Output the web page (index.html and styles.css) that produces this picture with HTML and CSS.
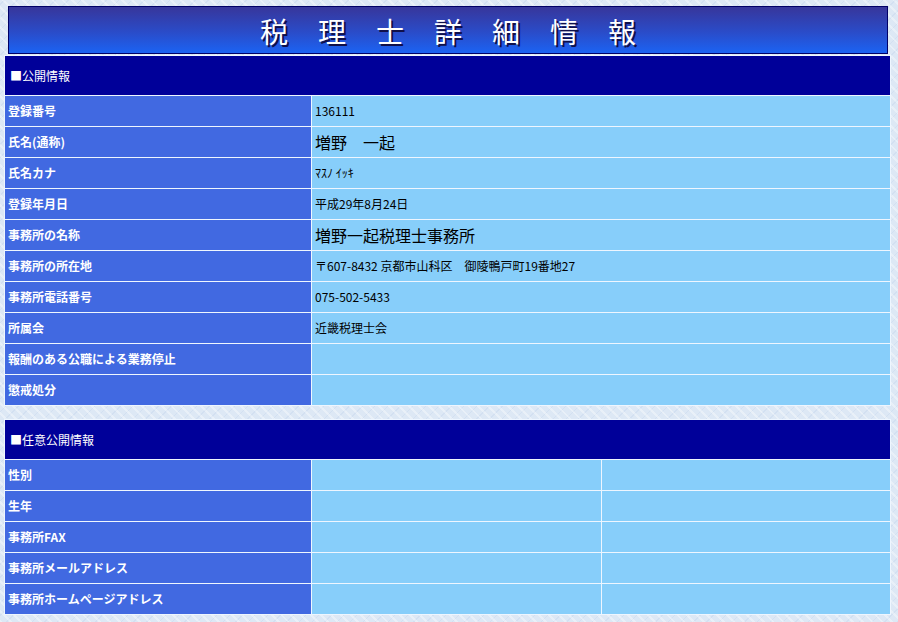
FILE: index.html
```html
<!DOCTYPE html>
<html lang="ja">
<head>
<meta charset="utf-8">
<title>税理士詳細情報</title>
<link rel="stylesheet" href="styles.css">
</head>
<body>
<div class="page">
  <div class="banner"><h1 class="title">税理士詳細情報</h1></div>

  <table class="info">
    <colgroup><col class="c-label"><col class="c-value"></colgroup>
    <tr><th class="sec" colspan="2">■公開情報</th></tr>
    <tr><td class="lbl">登録番号</td><td class="val">136111</td></tr>
    <tr><td class="lbl">氏名(通称)</td><td class="val big">増野　一起</td></tr>
    <tr><td class="lbl">氏名カナ</td><td class="val">ﾏｽﾉ ｲｯｷ</td></tr>
    <tr><td class="lbl">登録年月日</td><td class="val">平成29年8月24日</td></tr>
    <tr><td class="lbl">事務所の名称</td><td class="val big">増野一起税理士事務所</td></tr>
    <tr><td class="lbl">事務所の所在地</td><td class="val">〒607-8432 京都市山科区　御陵鴨戸町19番地27</td></tr>
    <tr><td class="lbl">事務所電話番号</td><td class="val">075-502-5433</td></tr>
    <tr><td class="lbl">所属会</td><td class="val">近畿税理士会</td></tr>
    <tr><td class="lbl">報酬のある公職による業務停止</td><td class="val"></td></tr>
    <tr><td class="lbl">懲戒処分</td><td class="val"></td></tr>
  </table>

  <table class="info second">
    <colgroup><col class="c-label"><col class="c-mid"><col class="c-last"></colgroup>
    <tr><th class="sec" colspan="3">■任意公開情報</th></tr>
    <tr><td class="lbl">性別</td><td class="val"></td><td class="val"></td></tr>
    <tr><td class="lbl">生年</td><td class="val"></td><td class="val"></td></tr>
    <tr><td class="lbl">事務所FAX</td><td class="val"></td><td class="val"></td></tr>
    <tr><td class="lbl">事務所メールアドレス</td><td class="val"></td><td class="val"></td></tr>
    <tr><td class="lbl">事務所ホームページアドレス</td><td class="val"></td><td class="val"></td></tr>
  </table>
</div>
</body>
</html>
```

FILE: styles.css
```css
html, body {
  margin: 0;
  padding: 0;
}
body {
  background-color: #dde8f5;
  background-image:
    repeating-linear-gradient(45deg, rgba(255,255,255,0.35) 0 2px, rgba(255,255,255,0) 2px 7px),
    repeating-linear-gradient(-45deg, rgba(180,200,230,0.25) 0 1px, rgba(255,255,255,0) 1px 9px);
  font-family: "Noto Sans CJK JP", "Liberation Sans", sans-serif;
  font-size: 12px;
  width: 898px;
  height: 622px;
  overflow: hidden;
}
.page {
  padding: 6px 0 0 4px;
}
.banner {
  margin-left: 4px;
  width: 878px;
  height: 46px;
  border: 1px solid #000066;
  background: linear-gradient(to bottom, #37369b 0%, #2a4cc9 55%, #1b63f3 100%);
  display: flex;
  align-items: center;
  justify-content: center;
}
.title {
  margin: 0;
  padding: 2px 0 0 30px;
  font-family: "Noto Sans CJK JP", sans-serif;
  font-weight: 400;
  font-size: 28px;
  line-height: 32px;
  letter-spacing: 30px;
  color: #ffffff;
  text-shadow: 2px 2px 0 #10104a;
}
.info {
  margin-top: 1px;
  width: 887px;
  border-collapse: separate;
  border-spacing: 1px;
  background: #eef6ff;
  table-layout: fixed;
}
.info.second {
  margin-top: 13px;
}
.c-label { width: 306px; }
.c-mid { width: 289px; }
.sec {
  height: 39px;
  padding: 0 0 0 5px;
  background: #000099;
  color: #ffffff;
  font-weight: normal;
  font-size: 12px;
  text-align: left;
  vertical-align: middle;
}
.lbl, .val {
  height: 30px;
  padding: 0 0 0 3px;
  vertical-align: middle;
  white-space: nowrap;
  line-height: 16px;
}
.lbl {
  background: #4169e1;
  color: #ffffff;
  font-weight: bold;
}
.val {
  background: #87cefa;
  color: #000000;
}
.val.big {
  font-size: 16px;
}
```
